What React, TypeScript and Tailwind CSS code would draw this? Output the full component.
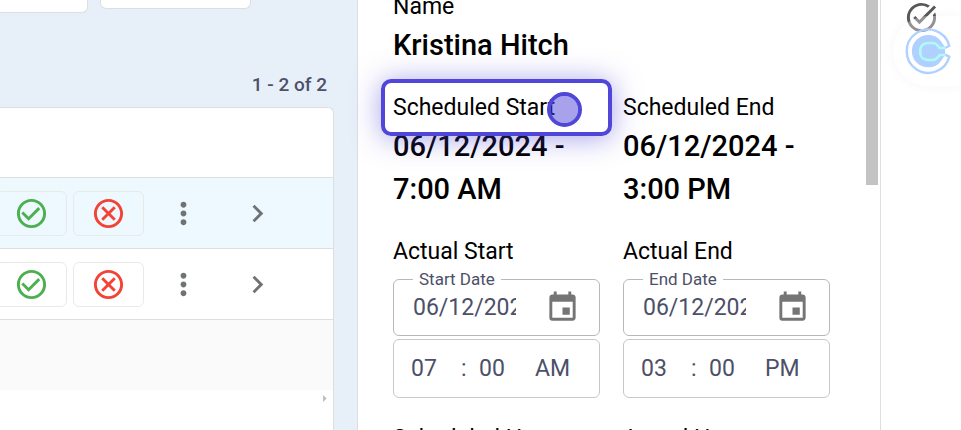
import {
  MdArrowRight,
  MdCheckCircleOutline,
  MdChevronRight,
  MdEvent,
  MdMoreVert,
  MdOutlineCancel,
  MdTaskAlt,
} from "react-icons/md";

interface Shift {
  id: number;
  selected: boolean;
}

const shifts: Shift[] = [
  { id: 1, selected: true },
  { id: 2, selected: false },
];

const labelClass = "text-[23px] leading-[35px] text-black";
const valueClass = "text-[29px] leading-[43px] font-medium text-black";
const actionClass =
  "flex h-[45px] w-[71px] items-center justify-center rounded-md border border-[#e8eae8]";

function ShiftRow({ shift }: { shift: Shift }) {
  return (
    <tr className={shift.selected ? "h-[71px] bg-[#edf9ff]" : "h-[71px]"}>
      <td className="border-b border-[#dcdee0] p-0">
        <div className="-ml-1 flex gap-1.5">
          <button aria-label="Approve" className={actionClass}>
            <MdCheckCircleOutline size={35} className="text-[#4caf50]" />
          </button>
          <button aria-label="Reject" className={actionClass}>
            <MdOutlineCancel size={35} className="text-[#f44336]" />
          </button>
        </div>
      </td>
      <td className="border-b border-[#dcdee0] p-0">
        <button aria-label="More options" className="mx-auto block text-[#707374]">
          <MdMoreVert size={35} />
        </button>
      </td>
      <td className="border-b border-[#dcdee0] p-0">
        <button aria-label="Open shift" className="mx-auto block text-[#707374]">
          <MdChevronRight size={35} />
        </button>
      </td>
      <td className="border-b border-[#dcdee0] p-0" />
    </tr>
  );
}

function ShiftList() {
  return (
    <main className="flex min-w-0 flex-1 flex-col bg-[#e7f0f9] pr-[23px]">
      <div className="flex h-[13px] items-start gap-3">
        <div className="h-[13px] w-[88px] rounded-br-md border-r border-b border-[#dcdee0] bg-white" />
        <div className="h-[9px] w-[151px] rounded-b-md border border-t-0 border-[#dcdee0] bg-white" />
      </div>
      <p className="mt-[58px] mb-2 pr-[7px] text-right text-[19px] leading-7 font-medium text-[#4c5068]">
        1 - 2 of 2
      </p>
      <div className="flex-1 rounded-tr-md border-t border-r border-[#dcdee0] bg-white">
        <table className="w-full table-fixed border-separate border-spacing-0">
          <colgroup>
            <col className="w-[144px]" />
            <col className="w-[78px]" />
            <col className="w-[70px]" />
            <col />
          </colgroup>
          <thead>
            <tr className="h-[70px]">
              <th colSpan={4} className="border-b border-[#dcdee0] p-0" />
            </tr>
          </thead>
          <tbody>
            {shifts.map((s) => (
              <ShiftRow key={s.id} shift={s} />
            ))}
          </tbody>
        </table>
        <div className="h-[70px] bg-[#fafafa]" />
        <div className="flex justify-end">
          <MdArrowRight size={17} className="text-[#bdbdbd]" />
        </div>
      </div>
    </main>
  );
}

interface ActualTimeProps {
  title: string;
  dateLabel: string;
  date: string;
  hour: string;
  minute: string;
  period: string;
}

function ActualTime({ title, dateLabel, date, hour, minute, period }: ActualTimeProps) {
  return (
    <div className="min-w-0">
      <p className={labelClass}>{title}</p>
      <fieldset className="h-[67px] min-w-0 rounded-md border border-[#b8b8b8] text-[#4c5068]">
        <legend className="ml-[19px] px-1.5 text-[17px] leading-5">{dateLabel}</legend>
        <div className="flex h-9 items-center justify-between px-[19px]">
          <input
            aria-label={dateLabel}
            defaultValue={date}
            className="w-[103px] bg-transparent pt-0.5 text-[23px] leading-[34px] outline-none"
          />
          <button aria-label="Open calendar" className="text-[#757575]">
            <MdEvent size={35} />
          </button>
        </div>
      </fieldset>
      <div className="mt-[3px] flex h-[59px] items-center rounded-md border border-[#c8c8c8] pt-0.5 pr-[11px] pl-[17px] text-[23px] text-[#4c5068]">
        <input
          aria-label={`${title} hour`}
          defaultValue={hour}
          className="w-[50px] bg-transparent outline-none"
        />
        <span className="w-[18px]">:</span>
        <input
          aria-label={`${title} minute`}
          defaultValue={minute}
          className="w-14 bg-transparent outline-none"
        />
        <select
          aria-label={`${title} period`}
          defaultValue={period}
          className="flex-1 appearance-none bg-transparent outline-none"
        >
          <option>AM</option>
          <option>PM</option>
        </select>
      </div>
    </div>
  );
}

function ShiftDetails() {
  return (
    <aside className="flex w-[524px] shrink-0 border-x border-[#dcdee0] bg-white">
      <div className="-mt-[11px] flex min-w-0 flex-1 flex-col gap-[23px] pr-9 pl-[35px]">
        <div>
          <p className={labelClass}>Name</p>
          <p className={valueClass}>Kristina Hitch</p>
        </div>

        <div className="grid grid-cols-2 gap-[23px]">
          <div>
            <div className="relative">
              <p className={labelClass}>Scheduled Start</p>
              {/* guide highlight and click marker */}
              <div className="absolute -inset-x-3 -inset-y-[11px] rounded-[10px] border-4 border-[#5046d8] shadow-[0_2px_28px_rgba(80,70,216,0.5)]" />
              <div className="absolute top-0.5 left-[154px] size-[35px] rounded-full border-4 border-[#5046d8] bg-[#5046d8]/50 bg-clip-padding" />
            </div>
            <p className={valueClass}>06/12/2024 - 7:00 AM</p>
          </div>
          <div>
            <p className={labelClass}>Scheduled End</p>
            <p className={valueClass}>06/12/2024 - 3:00 PM</p>
          </div>
        </div>

        <div className="grid grid-cols-2 gap-[23px]">
          <ActualTime
            title="Actual Start"
            dateLabel="Start Date"
            date="06/12/2024"
            hour="07"
            minute="00"
            period="AM"
          />
          <ActualTime
            title="Actual End"
            dateLabel="End Date"
            date="06/12/2024"
            hour="03"
            minute="00"
            period="PM"
          />
        </div>

        <div className="grid grid-cols-2 gap-[23px]">
          <p className={labelClass}>Scheduled Hours</p>
          <p className={labelClass}>Actual Hours</p>
        </div>
      </div>
      <div className="mr-0.5 h-[185px] w-3 bg-[#c3c3c3]" />
    </aside>
  );
}

function SideRail() {
  return (
    <div className="relative w-20 shrink-0 bg-white pl-[23px]">
      <button aria-label="Tasks" className="block text-[#585858]">
        <MdTaskAlt size={35} />
      </button>
      {/* floating extension bubble */}
      <div className="absolute top-4 right-0 left-3 flex h-[70px] items-center rounded-l-full bg-white/35 pl-[11px] shadow-[0_0_12px_rgba(0,0,0,0.04)]">
        <svg width="48" height="48" viewBox="74 80 144 144" fill="none">
          <path
            d="M146 104c18 0 30 6 39 19l12 18v24l-12 17c-9 13-21 19-39 19a48 48 0 0 1 0-97z"
            fill="#b0d0ff"
          />
          <path
            d="M197 143l13-7A65 65 0 1 0 210 169l-13-6"
            stroke="#b0d0ff"
            strokeWidth="7"
            strokeLinejoin="round"
          />
          <path
            d="M198 143h-17c-7-10-12-15-21-15h-13c-15 0-24 9-24 19v12c0 11 9 20 24 20h13c9 0 14-5 21-15h17"
            stroke="#b0faf2"
            strokeWidth="8"
            strokeLinejoin="round"
          />
        </svg>
      </div>
    </div>
  );
}

export default function App() {
  return (
    <div className="flex h-screen overflow-hidden font-[Roboto,sans-serif]">
      <ShiftList />
      <ShiftDetails />
      <SideRail />
    </div>
  );
}
